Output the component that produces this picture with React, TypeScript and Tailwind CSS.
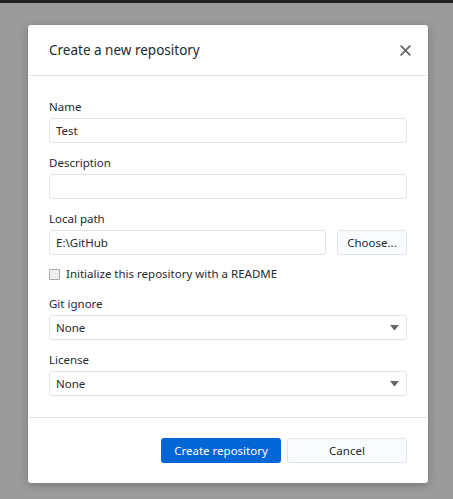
import React from "react";

function Label({ children }: { children: React.ReactNode }) {
  return <div className="text-[11.5px] leading-[16px] text-[#24292e] mb-[3px]">{children}</div>;
}

function Field({ value, className = "" }: { value?: string; className?: string }) {
  return (
    <div className={`h-[25px] border border-[#e1e4e8] rounded-[3px] bg-white flex items-center px-[6px] text-[11.5px] text-[#24292e] ${className}`}>
      {value}
    </div>
  );
}

function Select({ value }: { value: string }) {
  return (
    <div className="h-[25px] border border-[#e1e4e8] rounded-[3px] bg-white flex items-center justify-between px-[6px] text-[11.5px] text-[#24292e]">
      <span>{value}</span>
      <svg width="9" height="6" viewBox="0 0 9 6" className="mr-[1px]">
        <path d="M0 0 H9 L4.5 5.5 Z" fill="#666" />
      </svg>
    </div>
  );
}

export default function App() {
  return (
    <div
      className="w-[453px] h-[499px] bg-[#9b9b9b] flex flex-col"
      style={{ fontFamily: '"Noto Sans", "Open Sans", Arial, sans-serif' }}
    >
      <div className="h-[3px] bg-[#222]" />
      <div className="pl-[28px] pt-[22px]">
        <div className="w-[400px] h-[458px] bg-white rounded-[3px] shadow-[0_2px_8px_rgba(0,0,0,0.25)] flex flex-col">
          <div className="h-[51px] border-b border-[#e1e4e8] flex items-center justify-between pl-[21px] pr-[17px]">
            <div className="text-[13.5px] text-[#24292e]">Create a new repository</div>
            <svg width="11" height="11" viewBox="0 0 11 11">
              <path d="M1.2 1.2 L9.8 9.8 M9.8 1.2 L1.2 9.8" stroke="#666" strokeWidth="1.8" strokeLinecap="round" />
            </svg>
          </div>
          <div className="px-[21px] pt-[23px] pb-[21px] flex flex-col border-b border-[#e1e4e8]">
            <Label>Name</Label>
            <Field value="Test" />
            <div className="h-[12px]" />
            <Label>Description</Label>
            <Field />
            <div className="h-[12px]" />
            <Label>Local path</Label>
            <div className="flex gap-[11px]">
              <Field value="E:\GitHub" className="flex-1" />
              <div className="w-[70px] h-[25px] border border-[#e1e4e8] rounded-[3px] bg-[#fafbfc] flex items-center justify-center text-[11.5px] text-[#24292e]">
                Choose...
              </div>
            </div>
            <div className="flex items-center gap-[6px] mt-[12px] mb-[15px] h-[14px]">
              <div className="w-[11px] h-[11px] border border-[#aaa] bg-[#eee] rounded-[1px]" />
              <span className="text-[11.5px] text-[#24292e]">Initialize this repository with a README</span>
            </div>
            <Label>Git ignore</Label>
            <Select value="None" />
            <div className="h-[12px]" />
            <Label>License</Label>
            <Select value="None" />
          </div>
          <div className="flex justify-end gap-[6px] pr-[21px] pt-[20px]">
            <div className="w-[120px] h-[25px] rounded-[3px] bg-[#0366d6] flex items-center justify-center text-[11.5px] text-white">
              Create repository
            </div>
            <div className="w-[120px] h-[25px] rounded-[3px] border border-[#e1e4e8] bg-[#fafbfc] flex items-center justify-center text-[11.5px] text-[#24292e]">
              Cancel
            </div>
          </div>
        </div>
      </div>
    </div>
  );
}
